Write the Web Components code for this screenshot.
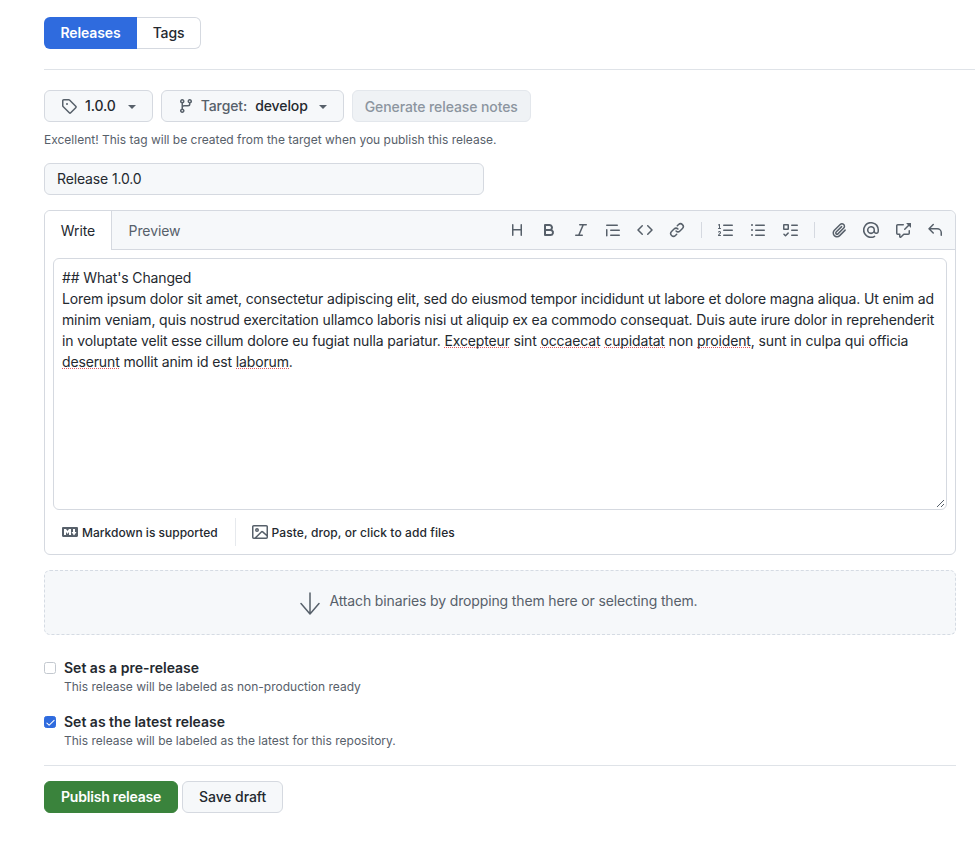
<!DOCTYPE html>
<html lang="en">
<head>
<meta charset="utf-8">
<title>Releases</title>
<style>
  html, body { margin: 0; background: #fff; }
  body { font-family: Inter, "Liberation Sans", sans-serif; color: #24292f; }
  .typo { background: repeating-linear-gradient(90deg, #e0565f 0 1px, transparent 1px 2px) 0 calc(100% - 1px) / 100% 1px no-repeat; }
</style>
</head>
<body>
<release-form>
  <div>## What's Changed</div>
  <div>Lorem ipsum dolor sit amet, consectetur adipiscing elit, sed do eiusmod tempor incididunt ut labore et dolore magna aliqua. Ut enim ad</div>
  <div>minim veniam, quis nostrud exercitation ullamco laboris nisi ut aliquip ex ea commodo consequat. Duis aute irure dolor in reprehenderit</div>
  <div>in voluptate velit esse cillum dolore eu fugiat nulla pariatur. <span class="typo">Excepteur</span> sint <span class="typo">occaecat</span> <span class="typo">cupidatat</span> non <span class="typo">proident</span>, sunt in culpa qui officia</div>
  <div><span class="typo">deserunt</span> mollit anim id est <span class="typo">laborum</span>.</div>
</release-form>
<script>
// octicons, 16px viewbox
const ICONS = {
  tag: "M1 7.775V2.75C1 1.784 1.784 1 2.75 1h5.025c.464 0 .91.184 1.238.513l6.25 6.25a1.75 1.75 0 0 1 0 2.474l-5.026 5.026a1.75 1.75 0 0 1-2.474 0l-6.25-6.25A1.752 1.752 0 0 1 1 7.775Zm1.5 0c0 .066.026.13.073.177l6.25 6.25a.25.25 0 0 0 .354 0l5.025-5.025a.25.25 0 0 0 0-.354l-6.25-6.25a.25.25 0 0 0-.177-.073H2.75a.25.25 0 0 0-.25.25ZM6 5a1 1 0 1 1 0 2 1 1 0 0 1 0-2Z",
  branch: "M9.5 3.25a2.25 2.25 0 1 1 3 2.122V6A2.5 2.5 0 0 1 10 8.5H6a1 1 0 0 0-1 1v1.128a2.251 2.251 0 1 1-1.5 0V5.372a2.25 2.25 0 1 1 1.5 0v1.836A2.493 2.493 0 0 1 6 7h4a1 1 0 0 0 1-1v-.628A2.25 2.25 0 0 1 9.5 3.25Zm-6 0a.75.75 0 1 0 1.5 0 .75.75 0 0 0-1.5 0Zm8.25-.75a.75.75 0 1 0 0 1.5.75.75 0 0 0 0-1.5ZM4.25 12a.75.75 0 1 0 0 1.5.75.75 0 0 0 0-1.5Z",
  heading: "M3.75 2a.75.75 0 0 1 .75.75V7h7V2.75a.75.75 0 0 1 1.5 0v10.5a.75.75 0 0 1-1.5 0V8.5h-7v4.75a.75.75 0 0 1-1.5 0V2.75A.75.75 0 0 1 3.75 2Z",
  bold: "M4 2h4.5a3.501 3.501 0 0 1 2.852 5.53A3.499 3.499 0 0 1 9.5 14H4a1 1 0 0 1-1-1V3a1 1 0 0 1 1-1Zm1 7v3h4.5a1.5 1.5 0 0 0 0-3Zm3.5-2a1.5 1.5 0 0 0 0-3H5v3Z",
  italic: "M6 2.75A.75.75 0 0 1 6.75 2h6.5a.75.75 0 0 1 0 1.5h-2.505l-3.858 9H9.25a.75.75 0 0 1 0 1.5h-6.5a.75.75 0 0 1 0-1.5h2.505l3.858-9H6.75A.75.75 0 0 1 6 2.75Z",
  quote: "M1.75 2.5h10.5a.75.75 0 0 1 0 1.5H1.75a.75.75 0 0 1 0-1.5Zm4 5h8.5a.75.75 0 0 1 0 1.5h-8.5a.75.75 0 0 1 0-1.5Zm0 5h8.5a.75.75 0 0 1 0 1.5h-8.5a.75.75 0 0 1 0-1.5ZM2.5 7.75v6a.75.75 0 0 1-1.5 0v-6a.75.75 0 0 1 1.5 0Z",
  code: "m11.28 3.22 4.25 4.25a.75.75 0 0 1 0 1.06l-4.25 4.25a.749.749 0 0 1-1.275-.326.749.749 0 0 1 .215-.734L13.94 8l-3.72-3.72a.749.749 0 0 1 .326-1.275.749.749 0 0 1 .734.215Zm-6.56 0a.751.751 0 0 1 1.042.018.751.751 0 0 1 .018 1.042L2.06 8l3.72 3.72a.749.749 0 0 1-.326 1.275.749.749 0 0 1-.734-.215L.47 8.53a.75.75 0 0 1 0-1.06Z",
  link: "m7.775 3.275 1.25-1.25a3.5 3.5 0 1 1 4.95 4.95l-2.5 2.5a3.5 3.5 0 0 1-4.95 0 .751.751 0 0 1 .018-1.042.751.751 0 0 1 1.042-.018 1.998 1.998 0 0 0 2.83 0l2.5-2.5a2.002 2.002 0 0 0-2.83-2.83l-1.25 1.25a.751.751 0 0 1-1.042-.018.751.751 0 0 1-.018-1.042Zm-4.69 9.64a1.998 1.998 0 0 0 2.83 0l1.25-1.25a.751.751 0 0 1 1.042.018.751.751 0 0 1 .018 1.042l-1.25 1.25a3.5 3.5 0 1 1-4.95-4.95l2.5-2.5a3.5 3.5 0 0 1 4.95 0 .751.751 0 0 1-.018 1.042.751.751 0 0 1-1.042.018 1.998 1.998 0 0 0-2.83 0l-2.5 2.5a1.998 1.998 0 0 0 0 2.83Z",
  ol: "M5 3.25a.75.75 0 0 1 .75-.75h8.5a.75.75 0 0 1 0 1.5h-8.5A.75.75 0 0 1 5 3.25Zm0 5a.75.75 0 0 1 .75-.75h8.5a.75.75 0 0 1 0 1.5h-8.5A.75.75 0 0 1 5 8.25Zm0 5a.75.75 0 0 1 .75-.75h8.5a.75.75 0 0 1 0 1.5h-8.5a.75.75 0 0 1-.75-.75ZM.924 10.32a.5.5 0 0 1-.851-.525l.001-.001.001-.002.002-.004.007-.011c.097-.144.215-.273.348-.384.228-.19.588-.392 1.068-.392.468 0 .858.181 1.126.484.259.294.377.673.377 1.038 0 .987-.686 1.495-1.156 1.845l-.047.035c-.303.225-.522.4-.654.597h1.357a.5.5 0 0 1 0 1H.5a.5.5 0 0 1-.5-.5c0-1.005.692-1.52 1.167-1.875l.035-.025c.531-.396.8-.625.8-1.078a.57.57 0 0 0-.128-.376C1.806 10.068 1.695 10 1.5 10a.658.658 0 0 0-.429.163.835.835 0 0 0-.144.153ZM2.003 2.5V6h.503a.5.5 0 0 1 0 1H.5a.5.5 0 0 1 0-1h.503V3.308l-.28.14a.5.5 0 0 1-.446-.895l1.003-.5a.5.5 0 0 1 .723.447Z",
  ul: "M5.75 2.5h8.5a.75.75 0 0 1 0 1.5h-8.5a.75.75 0 0 1 0-1.5Zm0 5h8.5a.75.75 0 0 1 0 1.5h-8.5a.75.75 0 0 1 0-1.5Zm0 5h8.5a.75.75 0 0 1 0 1.5h-8.5a.75.75 0 0 1 0-1.5ZM2 14a1 1 0 1 1 0-2 1 1 0 0 1 0 2Zm1-6a1 1 0 1 1-2 0 1 1 0 0 1 2 0ZM2 4a1 1 0 1 1 0-2 1 1 0 0 1 0 2Z",
  tasklist: "M2 2h4a1 1 0 0 1 1 1v4a1 1 0 0 1-1 1H2a1 1 0 0 1-1-1V3a1 1 0 0 1 1-1Zm4.655 8.595a.75.75 0 0 1 0 1.06L4.03 14.28a.75.75 0 0 1-1.06 0l-1.5-1.5a.749.749 0 0 1 .326-1.275.749.749 0 0 1 .734.215l.97.97 2.095-2.095a.75.75 0 0 1 1.06 0ZM9.75 2.5h5.5a.75.75 0 0 1 0 1.5h-5.5a.75.75 0 0 1 0-1.5Zm0 5h5.5a.75.75 0 0 1 0 1.5h-5.5a.75.75 0 0 1 0-1.5Zm0 5h5.5a.75.75 0 0 1 0 1.5h-5.5a.75.75 0 0 1 0-1.5Zm-7.25-9v3h3v-3Z",
  clip: "M12.212 3.02a1.753 1.753 0 0 0-2.478.003l-5.83 5.83a3.007 3.007 0 0 0-.88 2.127c0 .795.315 1.551.88 2.116.567.567 1.333.89 2.126.89.79 0 1.548-.321 2.116-.89l5.48-5.48a.75.75 0 0 1 1.061 1.06l-5.48 5.48a4.492 4.492 0 0 1-3.177 1.33c-1.2 0-2.345-.487-3.187-1.33a4.483 4.483 0 0 1-1.32-3.177c0-1.195.475-2.341 1.32-3.186l5.83-5.83a3.25 3.25 0 0 1 5.553 2.297c0 .863-.343 1.691-.953 2.301L7.439 12.39c-.375.377-.884.59-1.416.593a1.998 1.998 0 0 1-1.412-.593 1.992 1.992 0 0 1 0-2.828l5.48-5.48a.751.751 0 0 1 1.042.018.751.751 0 0 1 .018 1.042l-5.48 5.48a.492.492 0 0 0 0 .707.499.499 0 0 0 .352.154.51.51 0 0 0 .356-.154l5.833-5.827a1.755 1.755 0 0 0 0-2.481Z",
  mention: "M4.75 2.37a6.501 6.501 0 0 0 6.5 11.26.75.75 0 0 1 .75 1.298A7.999 7.999 0 0 1 .989 4.148 8 8 0 0 1 16 7.75v1.5a2.75 2.75 0 0 1-5.072 1.475 3.999 3.999 0 0 1-6.65-4.19A4 4 0 0 1 12 8v1.25a1.25 1.25 0 0 0 2.5 0V7.867a6.5 6.5 0 0 0-9.75-5.496ZM10.5 8a2.5 2.5 0 1 0-5 0 2.5 2.5 0 0 0 5 0Z",
  xref: "M2.75 3.5a.25.25 0 0 0-.25.25v7.5c0 .138.112.25.25.25h2a.75.75 0 0 1 .75.75v2.19l2.72-2.72a.749.749 0 0 1 .53-.22h4.5a.25.25 0 0 0 .25-.25v-2.5a.75.75 0 0 1 1.5 0v2.5A1.75 1.75 0 0 1 13.25 13H9.06l-2.573 2.573A1.458 1.458 0 0 1 4 14.543V13H2.75A1.75 1.75 0 0 1 1 11.25v-7.5C1 2.784 1.784 2 2.75 2h5.5a.75.75 0 0 1 0 1.5ZM16 1.25v4.146a.25.25 0 0 1-.427.177L14.03 4.03l-3.75 3.75a.749.749 0 0 1-1.275-.326.749.749 0 0 1 .215-.734l3.75-3.75-1.543-1.543A.25.25 0 0 1 11.604 1h4.146a.25.25 0 0 1 .25.25Z",
  reply: "M6.78 1.97a.75.75 0 0 1 0 1.06L3.81 6h6.44A4.75 4.75 0 0 1 15 10.75v2.5a.75.75 0 0 1-1.5 0v-2.5a3.25 3.25 0 0 0-3.25-3.25H3.81l2.97 2.97a.749.749 0 0 1-.326 1.275.749.749 0 0 1-.734-.215L1.47 7.28a.75.75 0 0 1 0-1.06l4.25-4.25a.75.75 0 0 1 1.06 0Z",
  markdown: "M14.85 3c.63 0 1.15.52 1.14 1.15v7.7c0 .63-.51 1.15-1.15 1.15H1.15C.52 13 0 12.48 0 11.85v-7.7C0 3.52.52 3 1.15 3ZM9 11V5H7L5.5 7 4 5H2v6h2V8l1.5 1.92L7 8v3Zm2.99.5L14.5 8H13V5h-2v3H9.5Z",
  image: "M16 13.25A1.75 1.75 0 0 1 14.25 15H1.75A1.75 1.75 0 0 1 0 13.25V2.75C0 1.784.784 1 1.75 1h12.5c.966 0 1.75.784 1.75 1.75ZM1.75 2.5a.25.25 0 0 0-.25.25v10.5c0 .138.112.25.25.25h.94l.03-.03 6.077-6.078a1.75 1.75 0 0 1 2.412-.06L14.5 10.31V2.75a.25.25 0 0 0-.25-.25Zm12.5 11a.25.25 0 0 0 .25-.25v-.917l-4.298-3.889a.25.25 0 0 0-.344.009L4.81 13.5ZM7 6a2 2 0 1 1-3.999.001A2 2 0 0 1 7 6ZM5.5 6a.5.5 0 1 0-1 0 .5.5 0 0 0 1 0Z",
  check: "M13.78 4.22a.75.75 0 0 1 0 1.06l-7.25 7.25a.75.75 0 0 1-1.06 0L2.22 9.28a.751.751 0 0 1 .018-1.042.751.751 0 0 1 1.042-.018L6 10.94l6.72-6.72a.75.75 0 0 1 1.06 0Z"
};

class GhIcon extends HTMLElement {
  connectedCallback() {
    const size = this.getAttribute("size") || 16;
    this.attachShadow({ mode: "open" }).innerHTML = `
      <style>
        :host { display: inline-flex; flex: none; color: inherit; }
        svg { display: block; fill: currentColor; }
      </style>
      <svg width="${size}" height="${size}" viewBox="0 0 16 16"><path d="${ICONS[this.getAttribute("name")]}"/></svg>`;
  }
}
customElements.define("gh-icon", GhIcon);

class GhButton extends HTMLElement {
  connectedCallback() {
    const variant = this.getAttribute("variant") || "default";
    const caret = this.hasAttribute("caret") ? `<span class="caret"></span>` : "";
    this.attachShadow({ mode: "open" }).innerHTML = `
      <style>
        :host { display: inline-flex; flex: none; }
        .btn {
          box-sizing: border-box; height: 32px; display: inline-flex; align-items: center;
          padding: 0 16px; border: 1px solid #d5d9e0; border-radius: 6px; background: #f6f8fa;
          font: 500 14px/20px Inter, "Liberation Sans", sans-serif; color: #24292f; white-space: nowrap;
          letter-spacing: -0.1px;
        }
        .primary { background: #3a833c; border-color: #3a833c; color: #fff; font-weight: 600; letter-spacing: -0.2px; }
        .disabled { background: #eff2f5; border-color: #e3e7ec; color: #8c959f; padding: 1px 12px 0; letter-spacing: -0.1px; }
        .caret {
          width: 0; height: 0; margin-left: 12px; margin-top: 1px;
          border: 4px solid transparent; border-top-color: #57606a; border-bottom: 0;
        }
      </style>
      <div class="btn ${variant}"><slot></slot>${caret}</div>`;
  }
}
customElements.define("gh-button", GhButton);

class GhSegmented extends HTMLElement {
  connectedCallback() {
    this.attachShadow({ mode: "open" }).innerHTML = `
      <style>
        :host { display: inline-flex; font: 500 14px/20px Inter, "Liberation Sans", sans-serif; letter-spacing: -0.14px; }
        div { box-sizing: border-box; height: 32px; display: flex; align-items: center; }
        .on { width: 93px; justify-content: center; background: #2f6bde; color: #fff; font-weight: 600; border-radius: 6px 0 0 6px; }
        .off { width: 64px; justify-content: center; border: 1px solid #d5d9e0; border-left: 0; border-radius: 0 6px 6px 0; color: #24292f; }
      </style>
      <div class="on">Releases</div><div class="off">Tags</div>`;
  }
}
customElements.define("gh-segmented", GhSegmented);

class MdToolbar extends HTMLElement {
  connectedCallback() {
    const groups = [
      ["heading", "bold", "italic", "quote", "code", "link"],
      ["ol", "ul", "tasklist"],
      ["clip", "mention", "xref", "reply"]
    ];
    const html = groups.map(g =>
      `<div class="group">${g.map(n => `<gh-icon name="${n}"></gh-icon>`).join("")}</div>`
    ).join(`<span class="sep"></span>`);
    this.attachShadow({ mode: "open" }).innerHTML = `
      <style>
        :host { display: flex; align-items: center; color: #57606a; }
        .group { display: flex; gap: 16px; }
        .sep { width: 1px; height: 16px; background: #d5d9e0; margin: 0 16px; }
      </style>${html}`;
  }
}
customElements.define("md-toolbar", MdToolbar);

class MdEditor extends HTMLElement {
  connectedCallback() {
    this.attachShadow({ mode: "open" }).innerHTML = `
      <style>
        :host { display: block; box-sizing: border-box; height: 345px; border: 1px solid #d5d9e0; border-radius: 6px; font-family: Inter, "Liberation Sans", sans-serif; }
        .head { display: flex; justify-content: space-between; align-items: center; height: 38px; background: #f6f8fa; border-bottom: 1px solid #d5d9e0; border-radius: 6px 6px 0 0; padding-right: 12px; }
        .tabs { display: flex; align-self: flex-start; letter-spacing: -0.1px; }
        .tab { display: flex; align-items: center; justify-content: center; box-sizing: border-box; font-size: 14px; }
        .write { width: 67px; background: #fff; border-right: 1px solid #d5d9e0; border-radius: 6px 0 0 0; color: #24292f; height: 39px; }
        .preview { width: 85px; color: #57606a; height: 38px; }
        .body { padding: 8px; }
        .text {
          box-sizing: border-box; height: 252px; border: 1px solid #d5d9e0; border-radius: 6px;
          padding: 8px 8px; font-size: 14px; line-height: 21px; letter-spacing: -0.14px; color: #24292f; position: relative; white-space: nowrap;
        }
        .text svg { position: absolute; right: 1px; bottom: 1px; }
        .foot { display: flex; align-items: center; height: 28px; padding: 0 17px; font-size: 12px; font-weight: 500; color: #24292f; }
        .foot .item { display: flex; align-items: center; gap: 4px; }
        .foot .item + .div + .item { letter-spacing: 0.09px; }
        .foot .div { width: 1px; height: 28px; background: #e6e9ed; margin: 0 16px 0 17px; }
        .foot gh-icon { color: #57606a; }
      </style>
      <div class="head">
        <div class="tabs"><div class="tab write">Write</div><div class="tab preview">Preview</div></div>
        <md-toolbar></md-toolbar>
      </div>
      <div class="body">
        <div class="text"><slot></slot>
          <svg width="9" height="9" viewBox="0 0 9 9"><path d="M1 8 8 1M5 8 8 5" stroke="#57606a" stroke-width="1" fill="none"/></svg>
        </div>
      </div>
      <div class="foot">
        <div class="item"><gh-icon name="markdown"></gh-icon>Markdown is supported</div>
        <span class="div"></span>
        <div class="item"><gh-icon name="image"></gh-icon>Paste, drop, or click to add files</div>
      </div>`;
  }
}
customElements.define("md-editor", MdEditor);

class GhDropzone extends HTMLElement {
  connectedCallback() {
    this.attachShadow({ mode: "open" }).innerHTML = `
      <style>
        :host { display: flex; box-sizing: border-box; height: 65px; align-items: center; justify-content: center; gap: 8px; padding-right: 5px; background: #f6f8fa; border: 1px dashed #d5dbe3; border-radius: 6px; font: 14px/20px Inter, "Liberation Sans", sans-serif; letter-spacing: -0.14px; color: #57606a; }
        svg { display: block; }
        span { padding-bottom: 4px; }
      </style>
      <svg width="24" height="24" viewBox="0 0 24 24" fill="none" stroke="#57606a" stroke-width="1.5" stroke-linecap="round" stroke-linejoin="round"><path d="M12 2v21M3 12.5 12 23l9-10.5"/></svg>
      <span><slot></slot></span>`;
  }
}
customElements.define("gh-dropzone", GhDropzone);

class GhCheck extends HTMLElement {
  connectedCallback() {
    const on = this.hasAttribute("checked");
    this.attachShadow({ mode: "open" }).innerHTML = `
      <style>
        :host { display: flex; gap: 8px; font-family: Inter, "Liberation Sans", sans-serif; }
        .box { box-sizing: border-box; width: 12px; height: 12px; margin-top: 2px; flex: none; border-radius: 2.5px; border: 1px solid #c3c8cf; background: #fff; display: flex; align-items: center; justify-content: center; color: #fff; }
        .box.on { background: #2f6bde; border-color: #2f6bde; }
        .title { font-size: 14px; line-height: 16px; font-weight: 600; color: #24292f; }
        .note { font-size: 12px; line-height: 18px; color: #57606a; margin-top: 2px; }
      </style>
      <div class="box ${on ? "on" : ""}">${on ? `<gh-icon name="check" size="11"></gh-icon>` : ""}</div>
      <div><div class="title">${this.getAttribute("label")}</div><div class="note"><slot></slot></div></div>`;
  }
}
customElements.define("gh-check", GhCheck);

class ReleaseForm extends HTMLElement {
  connectedCallback() {
    this.attachShadow({ mode: "open" }).innerHTML = `
      <style>
        :host { display: block; box-sizing: border-box; width: 975px; padding: 17px 19px 0 44px; font-family: Inter, "Liberation Sans", sans-serif; color: #24292f; }
        hr { border: 0; height: 1px; background: #dfe3e8; margin: 0; }
        .top-rule { margin: 20px -19px 20px 0; }
        .row { display: flex; gap: 8px; }
        .btn-label { display: inline-flex; align-items: center; }
        .btn-label gh-icon { color: #57606a; margin-right: 8px; }
        .btn-label em { font-style: normal; color: #57606a; margin-right: 8px; }
        .btn-label .branch { margin-right: 7px; }
        .btn-label b { font-weight: inherit; margin-right: -1px; }
        .hint { font-size: 12px; line-height: 18px; color: #57606a; margin: 9px 0 14px; }
        .title-input { box-sizing: border-box; width: 440px; height: 32px; line-height: 30px; padding: 0 12px; background: #f6f8fa; border: 1px solid #d5d9e0; border-radius: 6px; font-size: 14px; letter-spacing: -0.14px; margin-bottom: 15px; }
        gh-dropzone { margin-top: 15px; }
        .checks { display: flex; flex-direction: column; gap: 18px; margin: 25px 0 0; }
        .bottom-rule { margin: 15px 0 15px; }
        .actions { display: flex; gap: 4px; }
      </style>
      <gh-segmented></gh-segmented>
      <hr class="top-rule">
      <div class="row">
        <gh-button caret><span class="btn-label"><gh-icon name="tag"></gh-icon>1.0.0</span></gh-button>
        <gh-button caret><span class="btn-label"><gh-icon class="branch" name="branch"></gh-icon><em>Target:</em><b>develop</b></span></gh-button>
        <gh-button variant="disabled">Generate release notes</gh-button>
      </div>
      <div class="hint">Excellent! This tag will be created from the target when you publish this release.</div>
      <div class="title-input">Release 1.0.0</div>
      <md-editor><slot></slot></md-editor>
      <gh-dropzone>Attach binaries by dropping them here or selecting them.</gh-dropzone>
      <div class="checks">
        <gh-check label="Set as a pre-release">This release will be labeled as non-production ready</gh-check>
        <gh-check label="Set as the latest release" checked>This release will be labeled as the latest for this repository.</gh-check>
      </div>
      <hr class="bottom-rule">
      <div class="actions">
        <gh-button variant="primary">Publish release</gh-button>
        <gh-button>Save draft</gh-button>
      </div>`;
  }
}
customElements.define("release-form", ReleaseForm);
</script>
</body>
</html>
